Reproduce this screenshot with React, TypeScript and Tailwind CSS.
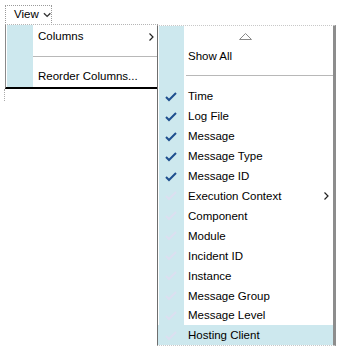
import React from 'react';

const font = { fontFamily: '"Liberation Sans", Arial, sans-serif' };

const Check = ({ on }: { on: boolean }) => (
  <svg width="12" height="10" viewBox="0 0 12 10" className="block">
    <path
      d="M1 5 L4 8 L11 1"
      fill="none"
      stroke={on ? '#1f4f8f' : '#dcdff0'}
      strokeWidth="2"
    />
  </svg>
);

const columns: { label: string; checked: boolean; sub?: boolean }[] = [
  { label: 'Time', checked: true },
  { label: 'Log File', checked: true },
  { label: 'Message', checked: true },
  { label: 'Message Type', checked: true },
  { label: 'Message ID', checked: true },
  { label: 'Execution Context', checked: false, sub: true },
  { label: 'Component', checked: false },
  { label: 'Module', checked: false },
  { label: 'Incident ID', checked: false },
  { label: 'Instance', checked: false },
  { label: 'Message Group', checked: false },
  { label: 'Message Level', checked: false },
  { label: 'Hosting Client', checked: false },
];

const strip = 'bg-[#cde8ee]';

export default function App() {
  return (
    <div className="relative w-[346px] h-[360px] bg-white text-[11.5px] text-black overflow-hidden" style={font}>
      {/* View button */}
      <div className="absolute left-[5px] top-[5px] w-[47px] h-[20px] border border-dotted border-[#9a9a9a] flex items-center pl-[8px] gap-[4px]">
        <span className="leading-none">View</span>
        <svg width="9" height="6" viewBox="0 0 9 6">
          <path d="M1 1 L4.5 4.5 L8 1" fill="none" stroke="#333" strokeWidth="1.5" />
        </svg>
      </div>

      {/* dotted frame below first menu */}
      <div className="absolute left-[4px] top-[89px] h-[12px] border-l border-dotted border-[#aaa]" />

      {/* main menu */}
      <div className="absolute left-[5px] top-[24px] w-[153px] h-[65px] bg-white border-l border-r border-[#8a8a8a] border-b-2 border-b-black border-t border-t-[#b5b5b5] [border-top-style:dotted] flex">
        <div className={`w-[26px] ml-[1px] shrink-0 ${strip}`} />
        <div className="flex-1 flex flex-col">
          <div className="h-[22px] flex items-center pl-[5px] pr-[3px] pt-[2px] justify-between">
            <span>Columns</span>
            <svg width="5" height="8" viewBox="0 0 5 8">
              <path d="M0.5 0.5 L4 4 L0.5 7.5" fill="none" stroke="#222" strokeWidth="1.2" />
            </svg>
          </div>
          <div className="h-[18px] flex items-center">
            <div className="w-full border-t border-[#b8b8b8]" />
          </div>
          <div className="h-[22px] flex items-center pl-[5px] pt-[2px]">Reorder Columns...</div>
        </div>
      </div>

      {/* submenu */}
      <div className="absolute left-[157px] top-[25px] w-[179px] h-[321px] bg-white border-l border-[#6e6e6e] border-t border-t-[#c8c8c8] [border-top-style:dotted] border-r-[3px] border-r-[#8d8d8d] border-b border-b-[#c8c8c8] [border-bottom-style:dotted] flex">
        <div className="relative flex-1 flex flex-col">
          <div className={`absolute left-[1px] top-0 bottom-0 w-[25px] ${strip}`} />
          <div className="relative h-[20px] flex items-center justify-center pt-[2px]">
            <svg width="13" height="7" viewBox="0 0 13 7">
              <path d="M0.5 6.5 L6.5 0.5 L12.5 6.5 Z" fill="#fff" stroke="#8a8a8a" strokeWidth="1" />
            </svg>
          </div>
          <div className="relative h-[20px] flex items-center pl-[30px] pt-[2px]">Show All</div>
          <div className="relative h-[20px] flex items-center pl-[28px]">
            <div className="w-full border-t border-[#b8b8b8]" />
          </div>
          {columns.map((c) => (
            <div
              key={c.label}
              className={`relative h-[20px] flex items-center pt-[2px] ${c.label === 'Hosting Client' ? strip : ''}`}
            >
              <div className="w-[25px] shrink-0 flex justify-center">
                <Check on={c.checked} />
              </div>
              <span className="flex-1 pl-[5px]">{c.label}</span>
              {c.sub && (
                <svg width="5" height="8" viewBox="0 0 5 8" className="mr-[4px]">
                  <path d="M0.5 0.5 L4 4 L0.5 7.5" fill="none" stroke="#222" strokeWidth="1.2" />
                </svg>
              )}
            </div>
          ))}
        </div>
      </div>
    </div>
  );
}
